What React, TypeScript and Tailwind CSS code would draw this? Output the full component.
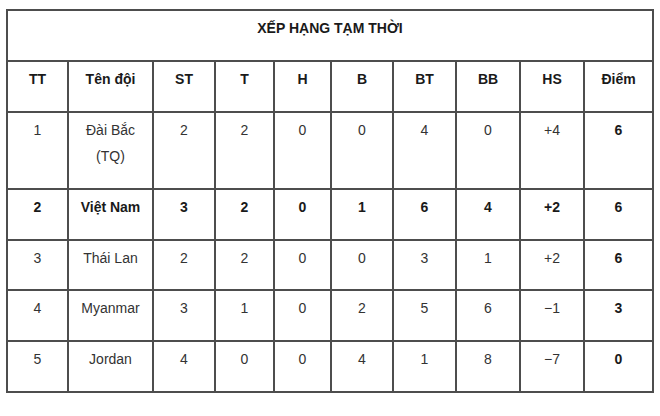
import React from "react";

const headers = ["TT", "Tên đội", "ST", "T", "H", "B", "BT", "BB", "HS", "Điểm"];

type Row = { cells: string[]; bold: boolean };

const rows: Row[] = [
  { cells: ["1", "Đài Bắc\n(TQ)", "2", "2", "0", "0", "4", "0", "+4", "6"], bold: false },
  { cells: ["2", "Việt Nam", "3", "2", "0", "1", "6", "4", "+2", "6"], bold: true },
  { cells: ["3", "Thái Lan", "2", "2", "0", "0", "3", "1", "+2", "6"], bold: false },
  { cells: ["4", "Myanmar", "3", "1", "0", "2", "5", "6", "−1", "3"], bold: false },
  { cells: ["5", "Jordan", "4", "0", "0", "4", "1", "8", "−7", "0"], bold: false },
];

const rowHeights = ["h-[75px]", "h-[49px]", "h-[48px]", "h-[49px]", "h-[49px]"];

export default function App() {
  return (
    <div className="w-[660px] h-[416px] bg-white font-['Liberation_Sans',Arial,sans-serif] text-[14px] text-[#333]">
      <div className="pt-[9px] pl-[6px]">
        <div className="inline-grid grid-cols-[59px_83px_60px_57px_55px_60px_61px_62px_62px_67px] gap-[2px] p-[2px] bg-[#4d4d4d]">
          <div className="col-span-10 bg-white h-[49px] pt-[4px] leading-[26px] text-center font-bold text-[#1a1a1a]">
            XẾP HẠNG TẠM THỜI
          </div>
          {headers.map((h) => (
            <div key={h} className="bg-white h-[49px] pt-[4px] leading-[26px] text-center font-bold text-[#1a1a1a]">
              {h}
            </div>
          ))}
          {rows.map((r, ri) =>
            r.cells.map((c, ci) => {
              const bold = r.bold || ci === 9;
              return (
                <div
                  key={`${ri}-${ci}`}
                  className={`bg-white ${rowHeights[ri]} pt-[4px] leading-[26px] text-center whitespace-pre-line ${
                    bold ? "font-bold text-[#1a1a1a]" : ""
                  }`}
                >
                  {c}
                </div>
              );
            })
          )}
        </div>
      </div>
    </div>
  );
}
